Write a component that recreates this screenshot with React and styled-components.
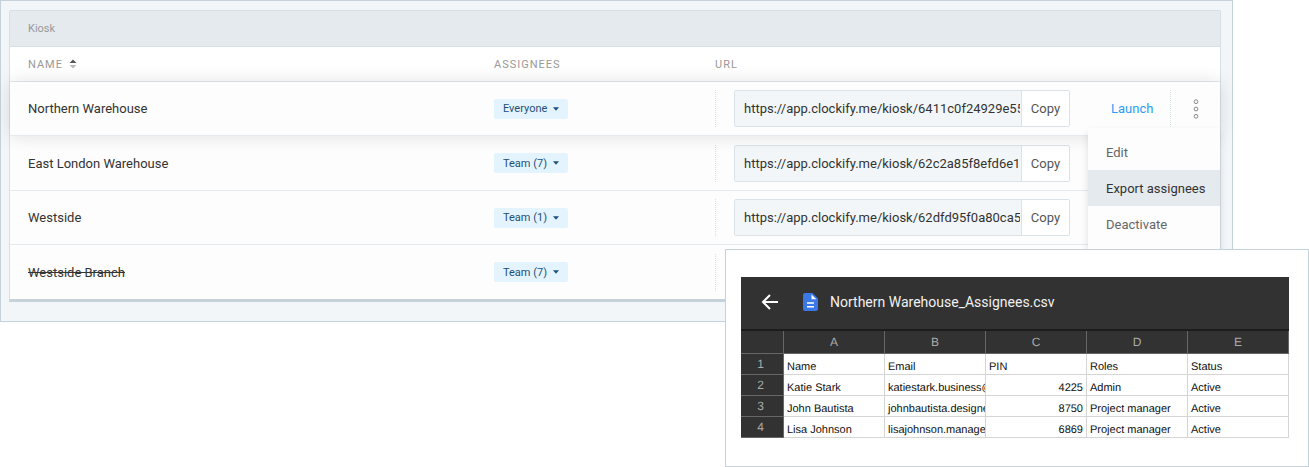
import React from "react";
import styled, { createGlobalStyle } from "styled-components";

const GlobalStyle = createGlobalStyle`
  * {
    box-sizing: border-box;
  }

  body {
    margin: 0;
    background: #fff;
    font-family: Roboto, "Liberation Sans", sans-serif;
    font-size: 13px;
    color: #333;
  }

  button,
  input {
    font: inherit;
    color: inherit;
    margin: 0;
  }
`;

const Page = styled.main`
  display: flex;
  flex-direction: column;
`;

const Panel = styled.section`
  margin-right: 76px;
  padding: 9px 11px 19px 8px;
  background: #f2f6f8;
  border: 1px solid #c6d2d9;
`;

const Card = styled.div`
  background: #fff;
  border: 1px solid #d6dfe4;
  border-bottom: 3px solid #c6d2d9;
  border-radius: 2px 2px 0 0;
`;

const CardTitle = styled.h1`
  margin: 0;
  padding: 0 18px;
  height: 36px;
  line-height: 35px;
  font-size: 11px;
  font-weight: 400;
  color: #999;
  background: #e4eaee;
  border-bottom: 1px solid #d6dfe4;
`;

const KioskTable = styled.table`
  width: 100%;
  table-layout: fixed;
  border-collapse: separate;
  border-spacing: 0;

  th,
  td {
    padding: 0;
    text-align: left;
    border-bottom: 1px solid #e4eaee;
  }

  tbody tr:last-child td {
    border-bottom: 0;
  }
`;

const Heading = styled.th`
  width: ${props => props.$width || "auto"};
  height: 35px;
  font-size: 11px;
  font-weight: 400;
  letter-spacing: 1px;
  color: #999;

  &:first-child {
    padding-left: 18px;
  }
`;

const SortButton = styled.button`
  display: inline-flex;
  align-items: center;
  gap: 6px;
  padding: 0;
  border: 0;
  background: none;
  letter-spacing: inherit;
`;

const Row = styled.tr`
  height: 54px;
  background: #fdfdfd;

  &:nth-child(even):not(:last-child) {
    height: 55px;
  }

  ${props =>
    props.$active &&
    `
    position: relative;
    z-index: 1;
    box-shadow: 0 0 18px rgba(0, 0, 0, 0.12);
  `}
`;

const NameCell = styled.td`
  && {
    padding-left: 18px;
  }
  text-decoration: ${props => (props.$inactive ? "line-through" : "none")};
`;

const Chip = styled.button`
  display: flex;
  align-items: center;
  justify-content: space-between;
  width: 74px;
  height: 20px;
  padding: 0 9px;
  border: 0;
  border-radius: 2px;
  background: #e4f4ff;
  color: #1d5078;
  font-size: 11px;
`;

const Separated = styled.div`
  display: flex;
  align-items: center;
  height: 37px;
  padding-left: ${props => props.$indent || "18px"};
  border-left: 1px dotted #d6dfe4;
`;

const UrlGroup = styled.div`
  display: flex;
  flex: 1;
  height: 37px;
  border: 1px solid #dbe3e8;
  border-radius: 2px;
  overflow: hidden;
`;

const UrlInput = styled.input`
  flex: 1;
  min-width: 0;
  padding: 0 1px 0 9px;
  border: 0;
  background: #f2f6f8;
`;

const CopyButton = styled.button`
  width: 48px;
  padding: 0;
  border: 0;
  border-left: 1px solid #dbe3e8;
  background: #fff;
  color: #555;
`;

const LaunchLink = styled.a`
  display: block;
  padding-left: 41px;
  color: #2a9df4;
  text-decoration: none;
`;

const MenuCell = styled.td`
  position: relative;
`;

const DotsButton = styled.button`
  display: flex;
  padding: 0;
  border: 0;
  background: none;
`;

const Menu = styled.div`
  position: absolute;
  top: 46px;
  right: 0;
  display: flex;
  flex-direction: column;
  width: 132px;
  padding: 6px 0 12px;
  background: #fdfdfd;
  box-shadow: 0 4px 8px rgba(0, 0, 0, 0.12);
`;

const MenuItem = styled.button`
  height: 36px;
  padding: 0 18px;
  border: 0;
  text-align: left;
  white-space: nowrap;
  background: ${props => (props.$selected ? "#e4eaee" : "none")};
  color: ${props => (props.$selected ? "#333" : "#666")};
`;

const Preview = styled.section`
  position: relative;
  z-index: 2;
  align-self: flex-end;
  width: 584px;
  margin-top: -73px;
  padding: 27px 19px 28px 15px;
  background: #fff;
  border: 1px solid #c6d2d9;
`;

const FileBar = styled.header`
  display: flex;
  align-items: center;
  height: 54px;
  padding: 0 20px 2px;
  background: #323232;
  border-bottom: 2px solid #1c1c1c;
  color: #f1f1f1;
`;

const BackButton = styled.button`
  display: flex;
  padding: 0;
  margin-right: 24px;
  border: 0;
  background: none;
`;

const FileName = styled.h2`
  margin: 0 0 0 12px;
  font-size: 14px;
  font-weight: 400;
`;

const Sheet = styled.table`
  width: 100%;
  table-layout: fixed;
  border-collapse: separate;
  border-spacing: 0;
  font-family: "Liberation Sans", Arial, sans-serif;
  font-size: 11px;
  text-rendering: geometricPrecision;
  color: #111;

  th {
    padding: 0;
    font-size: 12px;
    font-weight: 400;
    color: #aaa;
    background: #323232;
    border-right: 1px solid #666;
    border-bottom: 1px solid #666;
  }

  thead th {
    height: 23px;
  }

  thead th:first-child {
    width: 43px;
  }

  tbody th {
    padding: 0 3px 1px 0;
  }
`;

const SheetCell = styled.td`
  height: 21px;
  padding: 6px 3px 0;
  overflow: hidden;
  white-space: nowrap;
  line-height: 14px;
  text-align: ${props => (props.$number ? "right" : "left")};
  border-right: 1px solid #d5d5d5;
  border-bottom: 1px solid #d5d5d5;
`;

const kiosks = [
  {
    name: "Northern Warehouse",
    assignees: "Everyone",
    url: "https://app.clockify.me/kiosk/6411c0f24929e55",
    active: true
  },
  {
    name: "East London Warehouse",
    assignees: "Team (7)",
    url: "https://app.clockify.me/kiosk/62c2a85f8efd6e1"
  },
  {
    name: "Westside",
    assignees: "Team (1)",
    url: "https://app.clockify.me/kiosk/62dfd95f0a80ca5"
  },
  { name: "Westside Branch", assignees: "Team (7)", inactive: true }
];

const sheetRows = [
  ["Name", "Email", "PIN", "Roles", "Status"],
  ["Katie Stark", "katiestark.business@g", 4225, "Admin", "Active"],
  ["John Bautista", "johnbautista.designe", 8750, "Project manager", "Active"],
  ["Lisa Johnson", "lisajohnson.manager", 6869, "Project manager", "Active"]
];

const SortIcon = () => (
  <svg width="8" height="10" viewBox="0 0 8 10" aria-hidden="true">
    <path d="M0.5 4 L4 0.5 L7.5 4Z" fill="#555" />
    <path d="M0.5 6 L4 9.5 L7.5 6Z" fill="#bbb" />
  </svg>
);

const CaretIcon = () => (
  <svg width="6" height="4" viewBox="0 0 6 4" aria-hidden="true">
    <path d="M0 0.3 H6 L3 3.7Z" fill="#1d5078" />
  </svg>
);

const DotsIcon = () => (
  <svg width="6" height="20" viewBox="0 0 6 20" fill="none" stroke="#888">
    <circle cx="3" cy="2.7" r="1.9" />
    <circle cx="3" cy="10" r="1.9" />
    <circle cx="3" cy="17.3" r="1.9" />
  </svg>
);

const BackIcon = () => (
  <svg
    width="18"
    height="16"
    viewBox="0 0 18 16"
    fill="none"
    stroke="#fff"
    strokeWidth="2"
  >
    <path d="M9 1 L2 8 L9 15 M2 8 H17" />
  </svg>
);

const FileIcon = () => (
  <svg width="15" height="18" viewBox="0 0 15 18" aria-hidden="true">
    <path
      d="M2 0 H9.5 L15 5.5 V16 Q15 18 13 18 H2 Q0 18 0 16 V2 Q0 0 2 0Z"
      fill="#3b78e7"
    />
    <path d="M8.5 1.5 V6.3 H13.3Z" fill="#fff" />
    <path d="M4 10 H11 M4 13.7 H11" stroke="#fff" strokeWidth="1.6" />
  </svg>
);

const KioskRow = ({ kiosk }) => (
  <Row $active={kiosk.active}>
    <NameCell $inactive={kiosk.inactive}>{kiosk.name}</NameCell>
    <td>
      <Chip type="button">
        {kiosk.assignees}
        <CaretIcon />
      </Chip>
    </td>
    <td>
      <Separated>
        {kiosk.url && (
          <UrlGroup>
            <UrlInput
              readOnly
              value={kiosk.url}
              aria-label={`${kiosk.name} URL`}
            />
            <CopyButton type="button">Copy</CopyButton>
          </UrlGroup>
        )}
      </Separated>
    </td>
    <td>{kiosk.active && <LaunchLink href="#launch">Launch</LaunchLink>}</td>
    <MenuCell>
      {kiosk.active && (
        <>
          <Separated $indent="22px">
            <DotsButton type="button" aria-label="More actions">
              <DotsIcon />
            </DotsButton>
          </Separated>
          <Menu>
            <MenuItem type="button">Edit</MenuItem>
            <MenuItem type="button" $selected>
              Export assignees
            </MenuItem>
            <MenuItem type="button">Deactivate</MenuItem>
          </Menu>
        </>
      )}
    </MenuCell>
  </Row>
);

const AssigneesPreview = () => (
  <Preview>
    <FileBar>
      <BackButton type="button" aria-label="Back">
        <BackIcon />
      </BackButton>
      <FileIcon />
      <FileName>Northern Warehouse_Assignees.csv</FileName>
    </FileBar>
    <Sheet>
      <thead>
        <tr>
          <th />
          {["A", "B", "C", "D", "E"].map(letter => (
            <th key={letter}>{letter}</th>
          ))}
        </tr>
      </thead>
      <tbody>
        {sheetRows.map((cells, row) => (
          <tr key={row}>
            <th>{row + 1}</th>
            {cells.map((cell, i) => (
              <SheetCell key={i} $number={typeof cell === "number"}>
                {cell}
              </SheetCell>
            ))}
          </tr>
        ))}
      </tbody>
    </Sheet>
  </Preview>
);

const App = () => {
  return (
    <Page>
      <GlobalStyle />
      <Panel>
        <Card>
          <CardTitle>Kiosk</CardTitle>
          <KioskTable>
            <thead>
              <tr>
                <Heading>
                  <SortButton type="button">
                    NAME
                    <SortIcon />
                  </SortButton>
                </Heading>
                <Heading $width="221px">ASSIGNEES</Heading>
                <Heading $width="355px">URL</Heading>
                <Heading $width="100px" />
                <Heading $width="50px" />
              </tr>
            </thead>
            <tbody>
              {kiosks.map(kiosk => (
                <KioskRow key={kiosk.name} kiosk={kiosk} />
              ))}
            </tbody>
          </KioskTable>
        </Card>
      </Panel>
      <AssigneesPreview />
    </Page>
  );
};

export default App;
